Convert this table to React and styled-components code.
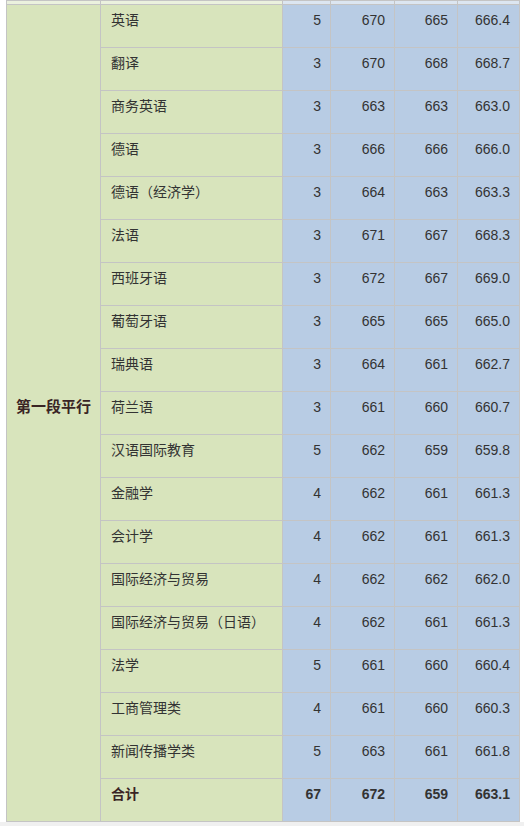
import styled, { createGlobalStyle } from "styled-components"

const rows = [
  ["英语", 5, 670, 665, "666.4"],
  ["翻译", 3, 670, 668, "668.7"],
  ["商务英语", 3, 663, 663, "663.0"],
  ["德语", 3, 666, 666, "666.0"],
  ["德语（经济学）", 3, 664, 663, "663.3"],
  ["法语", 3, 671, 667, "668.3"],
  ["西班牙语", 3, 672, 667, "669.0"],
  ["葡萄牙语", 3, 665, 665, "665.0"],
  ["瑞典语", 3, 664, 661, "662.7"],
  ["荷兰语", 3, 661, 660, "660.7"],
  ["汉语国际教育", 5, 662, 659, "659.8"],
  ["金融学", 4, 662, 661, "661.3"],
  ["会计学", 4, 662, 661, "661.3"],
  ["国际经济与贸易", 4, 662, 662, "662.0"],
  ["国际经济与贸易（日语）", 4, 662, 661, "661.3"],
  ["法学", 5, 661, 660, "660.4"],
  ["工商管理类", 4, 661, 660, "660.3"],
  ["新闻传播学类", 5, 663, 661, "661.8"],
]

const GlobalStyle = createGlobalStyle`
  html, body {
    margin: 0;
    padding: 0;
    background: #fff;
  }
  body {
    font-family: "Liberation Sans", Arial, "Noto Sans CJK SC", sans-serif;
  }
`

const Page = styled.div`
  padding-left: 6px;
  width: 524px;
  box-sizing: border-box;
`

const Table = styled.table`
  border-collapse: collapse;
  width: 513px;
  table-layout: fixed;
  font-size: 14px;
  line-height: 20px;
  color: #333;
  td {
    border: 1px solid #c4c4c4;
  }
`

const Strip = styled.td`
  height: 3px;
  padding: 0;
  background: ${(p) => (p.$blue ? "#dce6f1" : "#ebf1de")};
`

const Group = styled.td`
  background: #d8e4bc;
  text-align: center;
  vertical-align: middle;
  font-family: "Noto Sans CJK SC", sans-serif;
  font-size: 15px;
  font-weight: 700;
  color: #3a2424;
  padding: 0 0 14px;
`

const Name = styled.td`
  background: #d8e4bc;
  height: 43px;
  box-sizing: border-box;
  padding: 4px 10px 0;
  vertical-align: top;
  font-family: "Noto Sans CJK SC", sans-serif;
  font-weight: ${(p) => (p.$bold ? 700 : 400)};
  color: ${(p) => (p.$bold ? "#3a2424" : "#333")};
`

const Num = styled.td`
  background: #b8cce4;
  text-align: right;
  vertical-align: top;
  padding: 5px 9px 0 0;
  font-weight: ${(p) => (p.$bold ? 700 : 400)};
`

const Footer = styled.div`
  height: 6px;
  background: #f0f0f0;
`

export default function App() {
  return (
    <>
      <GlobalStyle />
      <Page>
        <Table>
          <colgroup>
            <col style={{ width: 94 }} />
            <col style={{ width: 182 }} />
            <col style={{ width: 48 }} />
            <col style={{ width: 64 }} />
            <col style={{ width: 63 }} />
            <col style={{ width: 62 }} />
          </colgroup>
          <tbody>
            <tr>
              <Strip />
              <Strip />
              <Strip $blue />
              <Strip $blue />
              <Strip $blue />
              <Strip $blue />
            </tr>
            {rows.map((r, i) => (
              <tr key={r[0]}>
                {i === 0 && <Group rowSpan={19}>第一段平行</Group>}
                <Name>{r[0]}</Name>
                <Num>{r[1]}</Num>
                <Num>{r[2]}</Num>
                <Num>{r[3]}</Num>
                <Num>{r[4]}</Num>
              </tr>
            ))}
            <tr>
              <Name $bold>合计</Name>
              <Num $bold>67</Num>
              <Num $bold>672</Num>
              <Num $bold>659</Num>
              <Num $bold>663.1</Num>
            </tr>
          </tbody>
        </Table>
      </Page>
      <Footer />
    </>
  )
}
